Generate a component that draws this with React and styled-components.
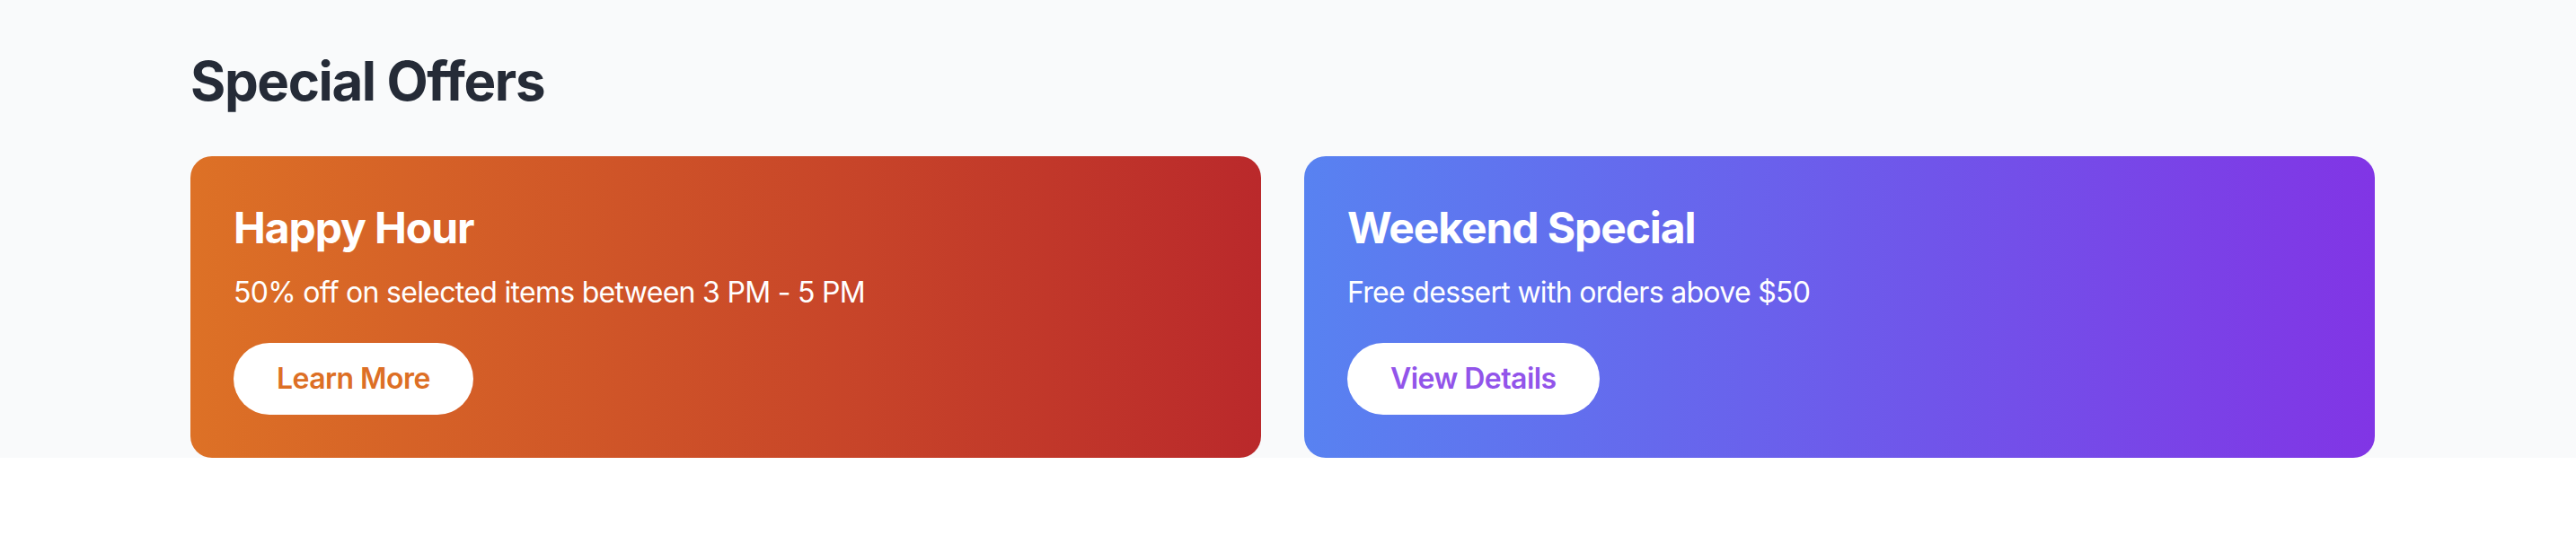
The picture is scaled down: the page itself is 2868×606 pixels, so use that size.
import React from "react";
import styled, { createGlobalStyle } from "styled-components";

const GlobalStyle = createGlobalStyle`
  html, body {
    margin: 0;
    padding: 0;
    background: #ffffff;
  }
  * {
    box-sizing: border-box;
  }
`;

const offers = [
  {
    id: "happy-hour",
    title: "Happy Hour",
    text: "50% off on selected items between 3 PM - 5 PM",
    cta: "Learn More",
    from: "#dd7126",
    to: "#ba292b",
    accent: "#dd6f25",
  },
  {
    id: "weekend",
    title: "Weekend Special",
    text: "Free dessert with orders above $50",
    cta: "View Details",
    from: "#5882f1",
    to: "#8135e5",
    accent: "#9254ea",
  },
];

const SpecialOffers = () => {
  return (
    <>
      <GlobalStyle />
      <Section>
        <Heading>Special Offers</Heading>
        <Grid>
          {offers.map((offer) => (
            <OfferCard key={offer.id} $from={offer.from} $to={offer.to}>
              <Title>{offer.title}</Title>
              <Text>{offer.text}</Text>
              <Button type="button" $accent={offer.accent}>
                {offer.cta}
              </Button>
            </OfferCard>
          ))}
        </Grid>
      </Section>
    </>
  );
};

const Section = styled.section`
  background: #f9fafb;
  padding: 54px 224px 0 212px;
  font-family: Inter, "Noto Sans", "Liberation Sans", sans-serif;
`;

const Heading = styled.h2`
  margin: 0 0 48px;
  font-size: 60px;
  line-height: 72px;
  font-weight: 700;
  color: #252b37;
  letter-spacing: -1.4px;
`;

const Grid = styled.div`
  display: grid;
  grid-template-columns: 1fr 1fr;
  gap: 48px;
`;

const OfferCard = styled.div`
  display: flex;
  flex-direction: column;
  align-items: flex-start;
  padding: 48px;
  border-radius: 24px;
  background: linear-gradient(to right, ${(p) => p.$from}, ${(p) => p.$to});
  color: #ffffff;
`;

const Title = styled.h3`
  margin: 0 0 16px;
  font-size: 48px;
  line-height: 64px;
  font-weight: 700;
  letter-spacing: -1.1px;
`;

const Text = styled.p`
  margin: 0 0 32px;
  font-size: 32px;
  line-height: 48px;
  font-weight: 400;
  letter-spacing: -0.7px;
`;

const Button = styled.button`
  border: none;
  background: #ffffff;
  color: ${(p) => p.$accent};
  font-family: inherit;
  font-size: 32px;
  line-height: 48px;
  font-weight: 600;
  letter-spacing: -0.55px;
  padding: 16px 48px;
  border-radius: 9999px;
  cursor: pointer;
`;

export default React.memo(SpecialOffers);
